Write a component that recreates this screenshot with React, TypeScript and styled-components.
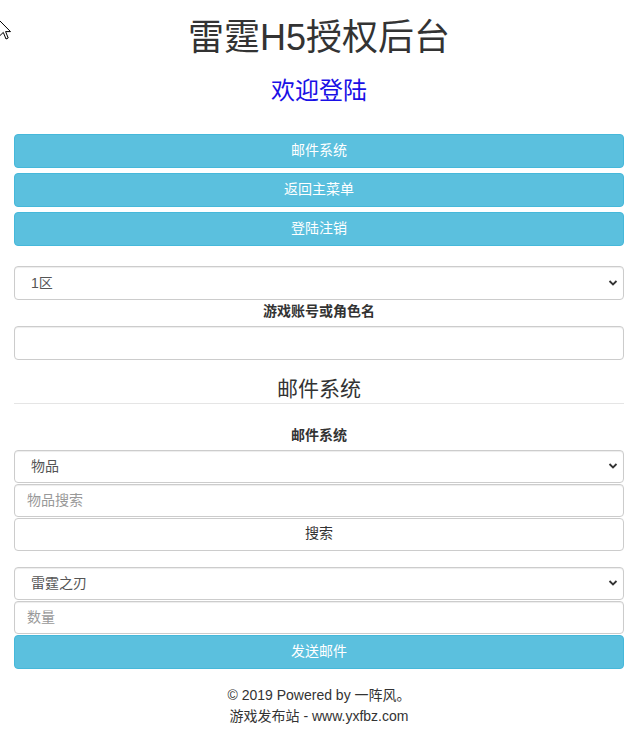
import React from "react";
import styled, { createGlobalStyle } from "styled-components";

const GlobalStyle = createGlobalStyle`
  * { box-sizing: border-box; }
  html, body { margin: 0; padding: 0; background: #fff; }
  body {
    font-family: "Liberation Sans", Arial, "Noto Sans CJK SC", sans-serif;
    font-size: 14px;
    line-height: 1.42857;
    color: #333;
  }
`;

const Page = styled.div`
  position: relative;
  display: flow-root;
  padding: 0 17px 20px 14px;
`;

const Cursor = styled.svg`
  position: absolute;
  left: -1px;
  top: 20px;
  width: 12px;
  height: 20px;
`;

const Title = styled.h1`
  margin: 18px 0 0;
  font-size: 36px;
  font-weight: 400;
  line-height: 1.1;
  text-align: center;
  color: #333;
`;

const Welcome = styled.h3`
  margin: 20px 0 30px;
  font-size: 24px;
  font-weight: 400;
  line-height: 1.1;
  text-align: center;
  color: #1a10e6;
`;

const ButtonStack = styled.div`
  display: flex;
  flex-direction: column;
  gap: 5px;
`;

const Button = styled.button<{ $variant?: "info" | "default"; $h?: number }>`
  display: block;
  width: 100%;
  height: ${(p) => p.$h ?? 34}px;
  padding: 0 12px;
  font-family: inherit;
  font-size: 14px;
  line-height: 1.42857;
  border-radius: 4px;
  cursor: pointer;
  text-align: center;
  border: 1px solid ${(p) => (p.$variant === "default" ? "#ccc" : "#46b8da")};
  background: ${(p) => (p.$variant === "default" ? "#fff" : "#5bc0de")};
  color: ${(p) => (p.$variant === "default" ? "#333" : "#fff")};
`;

const FormGroup = styled.div<{ $mt?: number }>`
  margin-top: ${(p) => p.$mt ?? 0}px;
  display: flex;
  flex-direction: column;
`;

const Label = styled.label`
  display: block;
  text-align: center;
  font-weight: 700;
  font-size: 14px;
  line-height: 20px;
  margin: 1px 0 5px;
  color: #333;
`;

const SelectWrap = styled.div<{ $h?: number }>`
  position: relative;
  height: ${(p) => p.$h ?? 34}px;
`;

const Select = styled.select`
  width: 100%;
  height: 100%;
  padding: 0 30px 0 16px;
  font-family: inherit;
  font-size: 14px;
  color: #555;
  background: #fff;
  border: 1px solid #ccc;
  border-radius: 4px;
  box-shadow: inset 0 1px 1px rgba(0, 0, 0, 0.075);
  appearance: none;
  -webkit-appearance: none;
  outline: none;
`;

const Chevron = styled.svg`
  position: absolute;
  right: 6px;
  top: 50%;
  margin-top: -4px;
  width: 10px;
  height: 8px;
  pointer-events: none;
`;

const Input = styled.input<{ $h?: number }>`
  width: 100%;
  height: ${(p) => p.$h ?? 34}px;
  padding: 0 12px;
  font-family: inherit;
  font-size: 14px;
  color: #555;
  background: #fff;
  border: 1px solid #ccc;
  border-radius: 4px;
  box-shadow: inset 0 1px 1px rgba(0, 0, 0, 0.075);
  outline: none;
  &::placeholder { color: #999; }
`;

const Legend = styled.div`
  margin: 14px 0 21px;
  font-size: 21px;
  line-height: 29px;
  text-align: center;
  color: #333;
  border-bottom: 1px solid #e5e5e5;
`;

const Stack = styled.div<{ $mt?: number }>`
  margin-top: ${(p) => p.$mt ?? 0}px;
  display: flex;
  flex-direction: column;
  gap: 1px;
`;

const Footer = styled.footer`
  margin-top: 16px;
  text-align: center;
  font-size: 14px;
  line-height: 21px;
  color: #333;
`;

const SelectBox: React.FC<{ options: string[]; h?: number }> = ({ options, h }) => (
  <SelectWrap $h={h}>
    <Select defaultValue={options[0]}>
      {options.map((o) => (
        <option key={o}>{o}</option>
      ))}
    </Select>
    <Chevron viewBox="0 0 10 8">
      <path d="M1.5 2 L5 5.5 L8.5 2" fill="none" stroke="#333" strokeWidth="1.8" />
    </Chevron>
  </SelectWrap>
);

export default function App() {
  return (
    <>
      <GlobalStyle />
      <Page>
        <Cursor viewBox="0 0 12 20">
          <path d="M0.5 0.5 L0.5 16 L4.3 12.4 L7 19 L9.2 18 L6.6 11.6 L11.5 11.6 Z" fill="#fff" stroke="#000" strokeWidth="1" />
        </Cursor>
        <Title>雷霆H5授权后台</Title>
        <Welcome>欢迎登陆</Welcome>
        <ButtonStack>
          <Button>邮件系统</Button>
          <Button>返回主菜单</Button>
          <Button>登陆注销</Button>
        </ButtonStack>
        <FormGroup $mt={20}>
          <SelectBox options={["1区"]} />
          <Label>游戏账号或角色名</Label>
          <Input type="text" />
        </FormGroup>
        <Legend>邮件系统</Legend>
        <Label>邮件系统</Label>
        <Stack>
          <SelectBox options={["物品"]} h={33} />
          <Input type="text" placeholder="物品搜索" $h={33} />
          <Button $variant="default" $h={33}>搜索</Button>
        </Stack>
        <Stack $mt={16}>
          <SelectBox options={["雷霆之刃"]} h={33} />
          <Input type="text" placeholder="数量" $h={33} />
          <Button $h={34}>发送邮件</Button>
        </Stack>
        <Footer>
          <div>© 2019 Powered by 一阵风。</div>
          <div>游戏发布站 - www.yxfbz.com</div>
        </Footer>
      </Page>
    </>
  );
}
